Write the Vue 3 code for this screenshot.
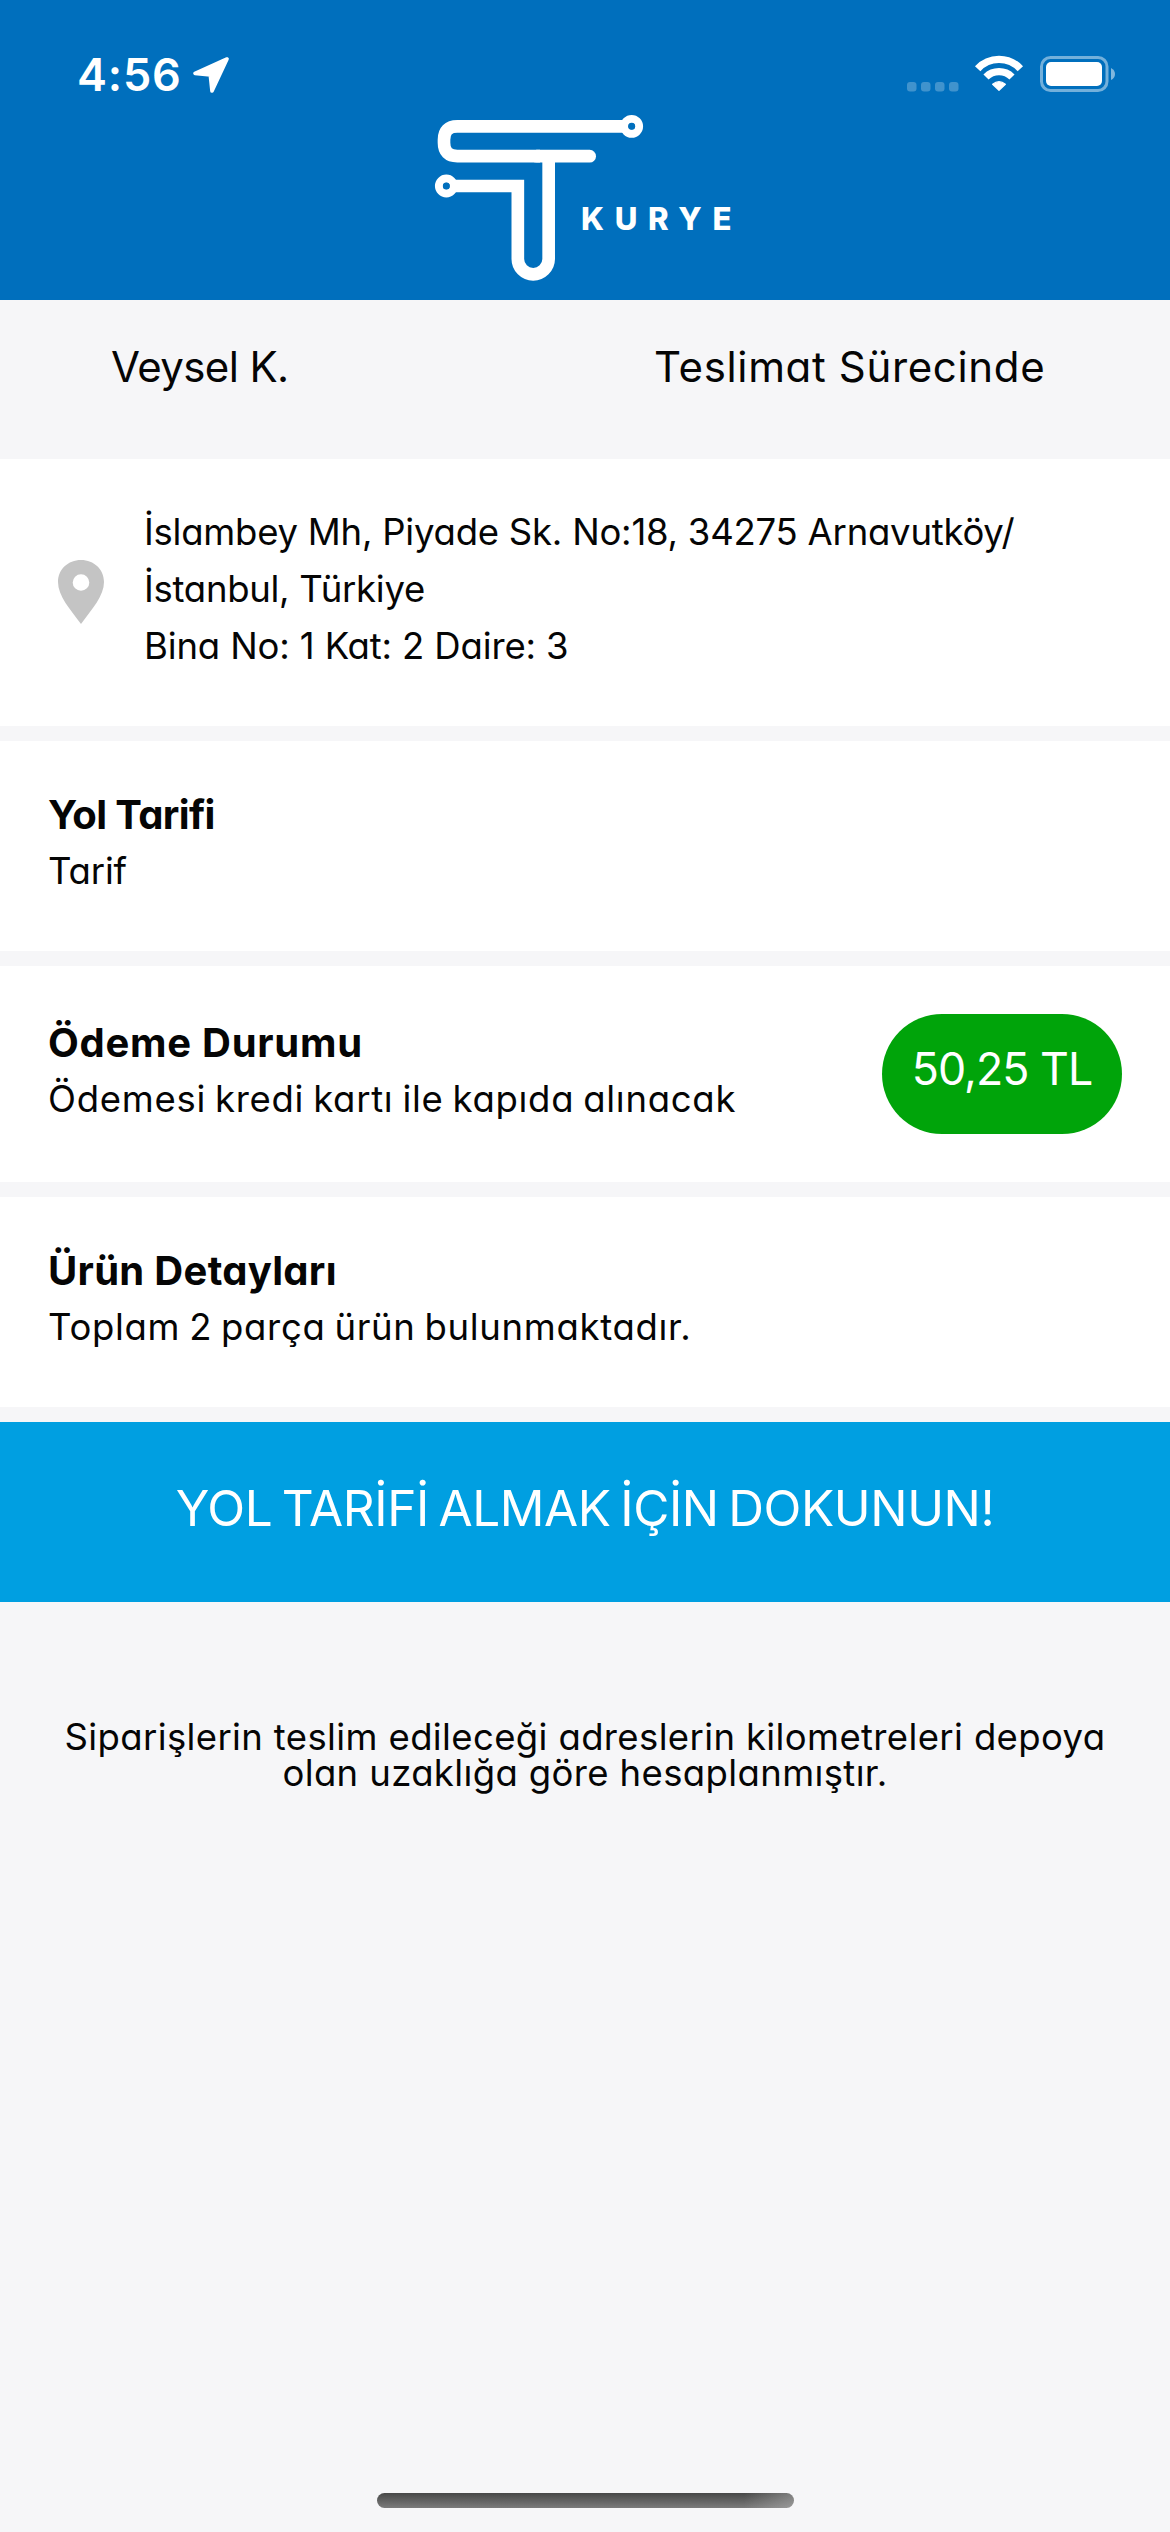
<script setup>
const customer = 'Veysel K.'
const status = 'Teslimat Sürecinde'
const address = [
  { text: 'İslambey Mh, Piyade Sk. No:18, 34275 Arnavutköy/', cls: 'l1' },
  { text: 'İstanbul, Türkiye', cls: 'l2' },
  { text: 'Bina No: 1 Kat: 2 Daire: 3', cls: 'l3' },
]
</script>

<template>
  <main class="screen">
    <header class="header">
      <div class="statusbar">
        <span class="time">4:56</span>
        <svg class="arrow" viewBox="0 0 114 114">
          <path d="M105 9 L9 52 L55 57 L60 105 Z" fill="#fff" stroke="#fff" stroke-width="11" stroke-linejoin="round" />
        </svg>
        <div class="indicators">
          <svg class="dots" viewBox="0 0 52 10">
            <rect v-for="i in 4" :key="i" :x="(i - 1) * 14" y="0" width="9.5" height="9.5" rx="3" />
          </svg>
          <svg class="wifi" viewBox="252 42 150 114">
            <g fill="none" stroke="#fff" stroke-width="22">
              <path d="M263 86 A87 87 0 0 1 391 86" />
              <path d="M288 111 A55.500 55.500 0 0 1 366 111" />
            </g>
            <path d="M327 151 L308 133 Q327 117 346 133 Z" fill="#fff" stroke="#fff" stroke-width="4" stroke-linejoin="round" />
          </svg>
          <svg class="battery" viewBox="0 0 78 38">
            <rect x="2.500" y="2.500" width="65.500" height="33" rx="9" fill="none" stroke="#fff" stroke-opacity=".45" stroke-width="3" />
            <rect x="7" y="7" width="56" height="24" rx="5" fill="#fff" />
            <path d="M72 13 Q76 15 76 19 Q76 23 72 25 Z" fill="#fff" fill-opacity=".5" />
          </svg>
        </div>
      </div>
      <svg class="logo" viewBox="0 0 990 600">
        <g fill="none" stroke="#fff" stroke-width="38">
          <path d="M620 79 H112 Q72 79 72 119 V128.500 Q72 168.500 112 168.500 H360" />
          <path d="M350 168.500 H509" stroke-linecap="round" />
          <path d="M95 258 H293.500 V477 A46 46 0 0 0 339.500 523 A46.500 46.500 0 0 0 386 477 V168" />
        </g>
        <circle cx="635" cy="79" r="22" fill="none" stroke="#fff" stroke-width="24.500" />
        <circle cx="79" cy="258" r="22" fill="none" stroke="#fff" stroke-width="24.500" />
        <circle cx="635" cy="79" r="10.500" fill="#006fbd" />
        <circle cx="79" cy="258" r="10.500" fill="#006fbd" />
        <text class="brand" x="483" y="390">KURYE</text>
      </svg>
    </header>

    <section class="summary">
      <span class="customer">{{ customer }}</span>
      <span class="status">{{ status }}</span>
    </section>

    <section class="card address">
      <svg class="pin" viewBox="0 0 46 64">
        <path fill="#c4c4c4" fill-rule="evenodd" d="M23 0 C10 0 0 9.500 0 22 C0 36 12 49 23 64 C34 49 46 36 46 22 C46 9.500 36 0 23 0 Z M23 14.200 A8.300 8.300 0 1 1 23 30.800 A8.300 8.300 0 1 1 23 14.200 Z" />
      </svg>
      <div>
        <p v-for="line in address" :key="line.cls" class="text" :class="line.cls">{{ line.text }}</p>
      </div>
    </section>

    <section class="card">
      <h2 class="title t1">Yol Tarifi</h2>
      <p class="text s1">Tarif</p>
    </section>

    <section class="card payment">
      <div>
        <h2 class="title t2">Ödeme Durumu</h2>
        <p class="text s2">Ödemesi kredi kartı ile kapıda alınacak</p>
      </div>
      <span class="price">50,25 TL</span>
    </section>

    <section class="card">
      <h2 class="title t3">Ürün Detayları</h2>
      <p class="text s3">Toplam 2 parça ürün bulunmaktadır.</p>
    </section>

    <button class="cta">YOL TARİFİ ALMAK İÇİN DOKUNUN!</button>

    <p class="note">Siparişlerin teslim edileceği adreslerin kilometreleri depoya olan uzaklığa göre hesaplanmıştır.</p>

    <div class="home"></div>
  </main>
</template>

<style>
body { margin: 0; }
</style>

<style scoped>
.screen {
  box-sizing: border-box;
  width: 1170px;
  height: 2532px;
  display: flex;
  flex-direction: column;
  background: #f6f6f8;
  color: #050505;
  font-family: Inter, sans-serif;
  font-feature-settings: "cv11";
  font-variant-ligatures: none;
  white-space: nowrap;
  overflow: hidden;
}
p, h2 { margin: 0; }
.header {
  height: 300px;
  flex: none;
  background: #006fbd;
  color: #fff;
}
.statusbar {
  box-sizing: border-box;
  height: 100px;
  display: flex;
  padding: 45px 53px 0 77px;
}
.time {
  width: 115px;
  font-size: 45px;
  font-weight: 600;
  line-height: 60px;
  letter-spacing: 0.78px;
}
.arrow { width: 38px; height: 38px; margin-top: 11px; }
.indicators { margin-left: auto; display: flex; }
.dots { width: 52px; height: 10px; margin: 37px 15px 0 0; fill: #fff; fill-opacity: .25; }
.wifi { width: 50px; height: 38px; margin: 9px 15px 0 0; }
.battery { width: 78px; height: 38px; margin-top: 10px; }
.logo { display: block; width: 330px; height: 200px; margin-left: 420px; }
.brand { fill: #fff; font-size: 93.6px; font-weight: 800; letter-spacing: 32px; }
.summary {
  box-sizing: border-box;
  height: 159px;
  flex: none;
  display: flex;
  padding: 37px 0 0 111px;
  font-size: 42px;
  line-height: 60px;
}
.customer { width: 543px; letter-spacing: -0.62px; }
.status { letter-spacing: 0.66px; }
.card {
  box-sizing: border-box;
  height: 210px;
  flex: none;
  margin-bottom: 15px;
  padding: 45px 48px 0;
  background: #fff;
}
.text { font-size: 36.5px; line-height: 57px; }
.title { font-size: 40px; font-weight: 700; line-height: 57px; }
.address { height: 267px; display: flex; padding-left: 58px; }
.pin { width: 46px; height: 64px; margin: 56px 40px 0 0; }
.l1 { letter-spacing: -0.23px; }
.l2 { letter-spacing: -0.28px; }
.l3 { letter-spacing: -0.14px; }
.t1 { letter-spacing: -0.63px; }
.t2 { letter-spacing: 0.73px; }
.t3 { letter-spacing: 0.3px; }
.s1 { letter-spacing: -0.15px; }
.s2 { letter-spacing: 0.72px; word-spacing: -2px; }
.s3 { letter-spacing: 0.68px; word-spacing: -2px; }
.payment {
  height: 216px;
  display: flex;
  justify-content: space-between;
  padding-top: 48px;
}
.price {
  box-sizing: border-box;
  width: 240px;
  height: 120px;
  border-radius: 60px;
  padding-bottom: 10px;
  background: #00a40a;
  color: #fff;
  font-size: 44.7px;
  line-height: 110px;
  letter-spacing: -0.96px;
  text-align: center;
}
.cta {
  height: 180px;
  flex: none;
  border: 0;
  padding: 0 0 9px;
  background: #009fe1;
  color: #fff;
  font: 400 49.5px/60px Inter, sans-serif;
  letter-spacing: -0.4px;
  word-spacing: -4px;
}
.note {
  margin-top: 117px;
  padding: 0 60px;
  font-size: 36.5px;
  line-height: 36px;
  letter-spacing: 0.37px;
  text-align: center;
  white-space: normal;
}
.home {
  width: 417px;
  height: 15px;
  margin: auto auto 24px;
  border-radius: 8px;
  background: linear-gradient(90deg, transparent 88%, rgba(190, 190, 190, .45)), linear-gradient(#484848, #7b7b7b);
}
</style>
